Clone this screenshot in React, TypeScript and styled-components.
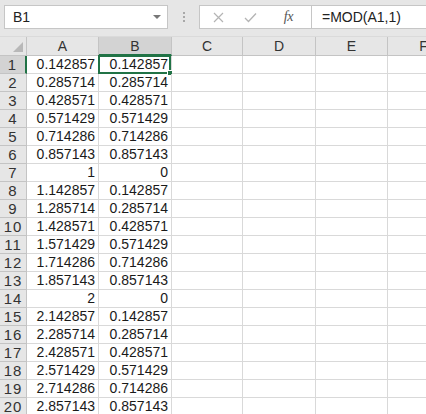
import styled, { createGlobalStyle } from 'styled-components';

const GlobalStyle = createGlobalStyle`
  html, body {
    margin: 0;
    padding: 0;
    background: #fff;
    overflow: hidden;
  }
  body {
    font-family: 'Liberation Sans', Arial, sans-serif;
  }
`;

const green = '#217346';
const gridLine = '#d9d9d9';
const headerLine = '#c4c4c4';

const Page = styled.div`
  width: 426px;
  height: 414px;
  overflow: hidden;
  background: #fff;
`;

const FormulaBar = styled.div`
  height: 37px;
  box-sizing: border-box;
  background: #e6e6e6;
  display: flex;
  align-items: flex-start;
  padding: 5px 0 0 4px;
  border-bottom: 1px solid #dadada;
`;

const NameBox = styled.div`
  width: 164px;
  height: 24px;
  flex: none;
  box-sizing: border-box;
  border: 1px solid #c6c6c6;
  background: #fff;
  display: flex;
  align-items: center;
  padding-left: 8px;
  font-size: 14px;
  color: #222;
`;

const DropArrow = styled.span`
  margin-left: auto;
  margin-right: 6px;
  width: 0;
  height: 0;
  border-left: 4px solid transparent;
  border-right: 4px solid transparent;
  border-top: 4px solid #777;
`;

const Grip = styled.div`
  width: 31px;
  height: 24px;
  flex: none;
  display: flex;
  flex-direction: column;
  align-items: center;
  justify-content: center;
  gap: 2px;
`;

const GripDot = styled.span`
  width: 2px;
  height: 2px;
  background: #a8a8a8;
`;

const FormulaBox = styled.div`
  flex: 1;
  height: 24px;
  box-sizing: border-box;
  border: 1px solid #c6c6c6;
  border-right: none;
  background: #fff;
  display: flex;
  align-items: center;
`;

const ButtonStrip = styled.div`
  width: 112px;
  height: 100%;
  flex: none;
  box-sizing: border-box;
  border-right: 1px solid #c6c6c6;
  display: flex;
  align-items: center;
  padding-left: 3px;
`;

const BarButton = styled.span<{ $w: number }>`
  width: ${(p) => p.$w}px;
  display: flex;
  align-items: center;
  justify-content: center;
`;

const Fx = styled.span`
  font-family: 'Liberation Serif', 'Times New Roman', serif;
  font-style: italic;
  font-size: 14px;
  color: #555;
  letter-spacing: -0.5px;
`;

const FormulaText = styled.div`
  padding-left: 10px;
  font-size: 14px;
  color: #222;
  white-space: nowrap;
`;

const Sheet = styled.div`
  display: grid;
  grid-template-columns: 27px 72px 73px 71px 73px 72px 72px;
  grid-template-rows: 19px repeat(20, 18px);
`;

const Corner = styled.div`
  box-sizing: border-box;
  background: #e6e6e6;
  border-right: 1px solid ${headerLine};
  border-bottom: 1px solid ${headerLine};
  display: flex;
  align-items: flex-end;
  justify-content: flex-end;
  padding: 0 3px 3px 0;
`;

const CornerTriangle = styled.span`
  width: 0;
  height: 0;
  border-left: 10px solid transparent;
  border-bottom: 10px solid #b8b8b8;
`;

const ColHeader = styled.div<{ $selected?: boolean }>`
  box-sizing: border-box;
  background: ${(p) => (p.$selected ? '#d3d3d3' : '#e6e6e6')};
  border-right: 1px solid ${headerLine};
  border-bottom: ${(p) => (p.$selected ? `2px solid ${green}` : `1px solid ${headerLine}`)};
  font-size: 14px;
  color: #333;
  text-align: center;
  line-height: 18px;
`;

const RowHeader = styled.div<{ $selected?: boolean }>`
  box-sizing: border-box;
  background: ${(p) => (p.$selected ? '#d3d3d3' : '#e6e6e6')};
  border-right: ${(p) => (p.$selected ? `2px solid ${green}` : `1px solid ${headerLine}`)};
  border-bottom: 1px solid ${headerLine};
  font-size: 15px;
  letter-spacing: 1px;
  color: #333;
  text-align: center;
  line-height: 17px;
`;

const Cell = styled.div<{ $active?: boolean }>`
  position: relative;
  box-sizing: border-box;
  border-right: 1px solid ${gridLine};
  border-bottom: 1px solid ${gridLine};
  font-size: 14px;
  color: #1a1a1a;
  text-align: right;
  padding-right: 3px;
  line-height: 17px;
  white-space: nowrap;
`;

const Selection = styled.div`
  position: absolute;
  top: -1px;
  left: -1px;
  width: 73px;
  height: 19px;
  box-sizing: border-box;
  border: 2px solid ${green};
  pointer-events: none;
`;

const FillHandle = styled.div`
  position: absolute;
  right: -4px;
  bottom: -4px;
  width: 6px;
  height: 6px;
  box-sizing: border-box;
  background: ${green};
  border: 1px solid #fff;
`;

function fmt(v: number) {
  return String(parseFloat(v.toFixed(6)));
}

const columns = ['A', 'B', 'C', 'D', 'E', 'F'];
const rows = Array.from({ length: 20 }, (_, i) => i + 1);

export default function App() {
  return (
    <Page>
      <GlobalStyle />
      <FormulaBar>
        <NameBox>
          B1
          <DropArrow />
        </NameBox>
        <Grip>
          <GripDot />
          <GripDot />
          <GripDot />
        </Grip>
        <FormulaBox>
          <ButtonStrip>
            <BarButton $w={32}>
              <svg width="11" height="11" viewBox="0 0 11 11">
                <path d="M1 1L10 10M10 1L1 10" stroke="#b4b4b4" strokeWidth="1.2" fill="none" />
              </svg>
            </BarButton>
            <BarButton $w={32}>
              <svg width="13" height="11" viewBox="0 0 13 11">
                <path d="M1 6L4.5 9.5L12 1.5" stroke="#b4b4b4" strokeWidth="1.3" fill="none" />
              </svg>
            </BarButton>
            <BarButton $w={46}>
              <Fx>fx</Fx>
            </BarButton>
          </ButtonStrip>
          <FormulaText>=MOD(A1,1)</FormulaText>
        </FormulaBox>
      </FormulaBar>
      <Sheet>
        <Corner>
          <CornerTriangle />
        </Corner>
        {columns.map((c) => (
          <ColHeader key={c} $selected={c === 'B'}>
            {c}
          </ColHeader>
        ))}
        {rows.map((r) => (
          <Row key={r} r={r} />
        ))}
      </Sheet>
    </Page>
  );
}

function Row({ r }: { r: number }) {
  const a = fmt(r / 7);
  const b = fmt((r % 7) / 7);
  return (
    <>
      <RowHeader $selected={r === 1}>{r}</RowHeader>
      <Cell>{a}</Cell>
      <Cell>
        {b}
        {r === 1 && (
          <Selection>
            <FillHandle />
          </Selection>
        )}
      </Cell>
      <Cell />
      <Cell />
      <Cell />
      <Cell />
    </>
  );
}
